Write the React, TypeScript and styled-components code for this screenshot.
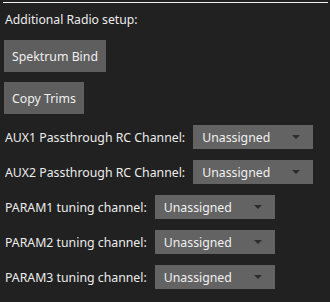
import React from "react";
import styled, { createGlobalStyle } from "styled-components";

const Global = createGlobalStyle`
  html, body {
    margin: 0;
    padding: 0;
    background: #212121;
  }
  body {
    font-family: "Noto Sans", "Open Sans", sans-serif;
    font-size: 12.3px;
    color: #ececec;
  }
`

const Panel = styled.div`
  width: 330px;
  height: 302px;
  padding: 2px 2px 0 3px;
  box-sizing: border-box;
  display: flex;
  flex-direction: column;
`
const Rule = styled.div`
  height: 1px;
  background: #f2f2f2;
`
const Body = styled.div`
  padding-left: 1px;
  display: flex;
  flex-direction: column;
`
const Title = styled.div`
  margin: 8px 0 0 1px;
  line-height: 18px;
  font-size: 12.2px;
`
const Button = styled.button`
  align-self: flex-start;
  margin-top: ${(p: { gap: number }) => p.gap}px;
  height: 32px;
  padding: 0 8px;
  border: none;
  background: #5e5e5e;
  color: #efefef;
  font-family: inherit;
  font-size: 12.3px;
`
const Row = styled.div`
  margin-top: 11px;
  display: flex;
  align-items: center;
  gap: 8px;
  height: 24px;
`
const Label = styled.span`
  padding-left: 1px;
  white-space: nowrap;
`
const Select = styled.div`
  width: 120px;
  height: 24px;
  box-sizing: border-box;
  background: #636363;
  display: flex;
  align-items: center;
  justify-content: space-between;
  padding: 0 13px 0 9px;
  color: #f0f0f0;
`
const Caret = styled.span`
  width: 0;
  height: 0;
  border-left: 4px solid transparent;
  border-right: 4px solid transparent;
  border-top: 4px solid #2c2c2c;
`

const rows = [
  "AUX1 Passthrough RC Channel:",
  "AUX2 Passthrough RC Channel:",
  "PARAM1 tuning channel:",
  "PARAM2 tuning channel:",
  "PARAM3 tuning channel:",
];

export default function App() {
  return (
    <Panel>
      <Global />
      <Rule />
      <Body>
        <Title>Additional Radio setup:</Title>
        <Button gap={11}>Spektrum Bind</Button>
        <Button gap={10}>Copy Trims</Button>
        {rows.map((r) => (
          <Row key={r}>
            <Label>{r}</Label>
            <Select>
              <span>Unassigned</span>
              <Caret />
            </Select>
          </Row>
        ))}
      </Body>
    </Panel>
  );
}
